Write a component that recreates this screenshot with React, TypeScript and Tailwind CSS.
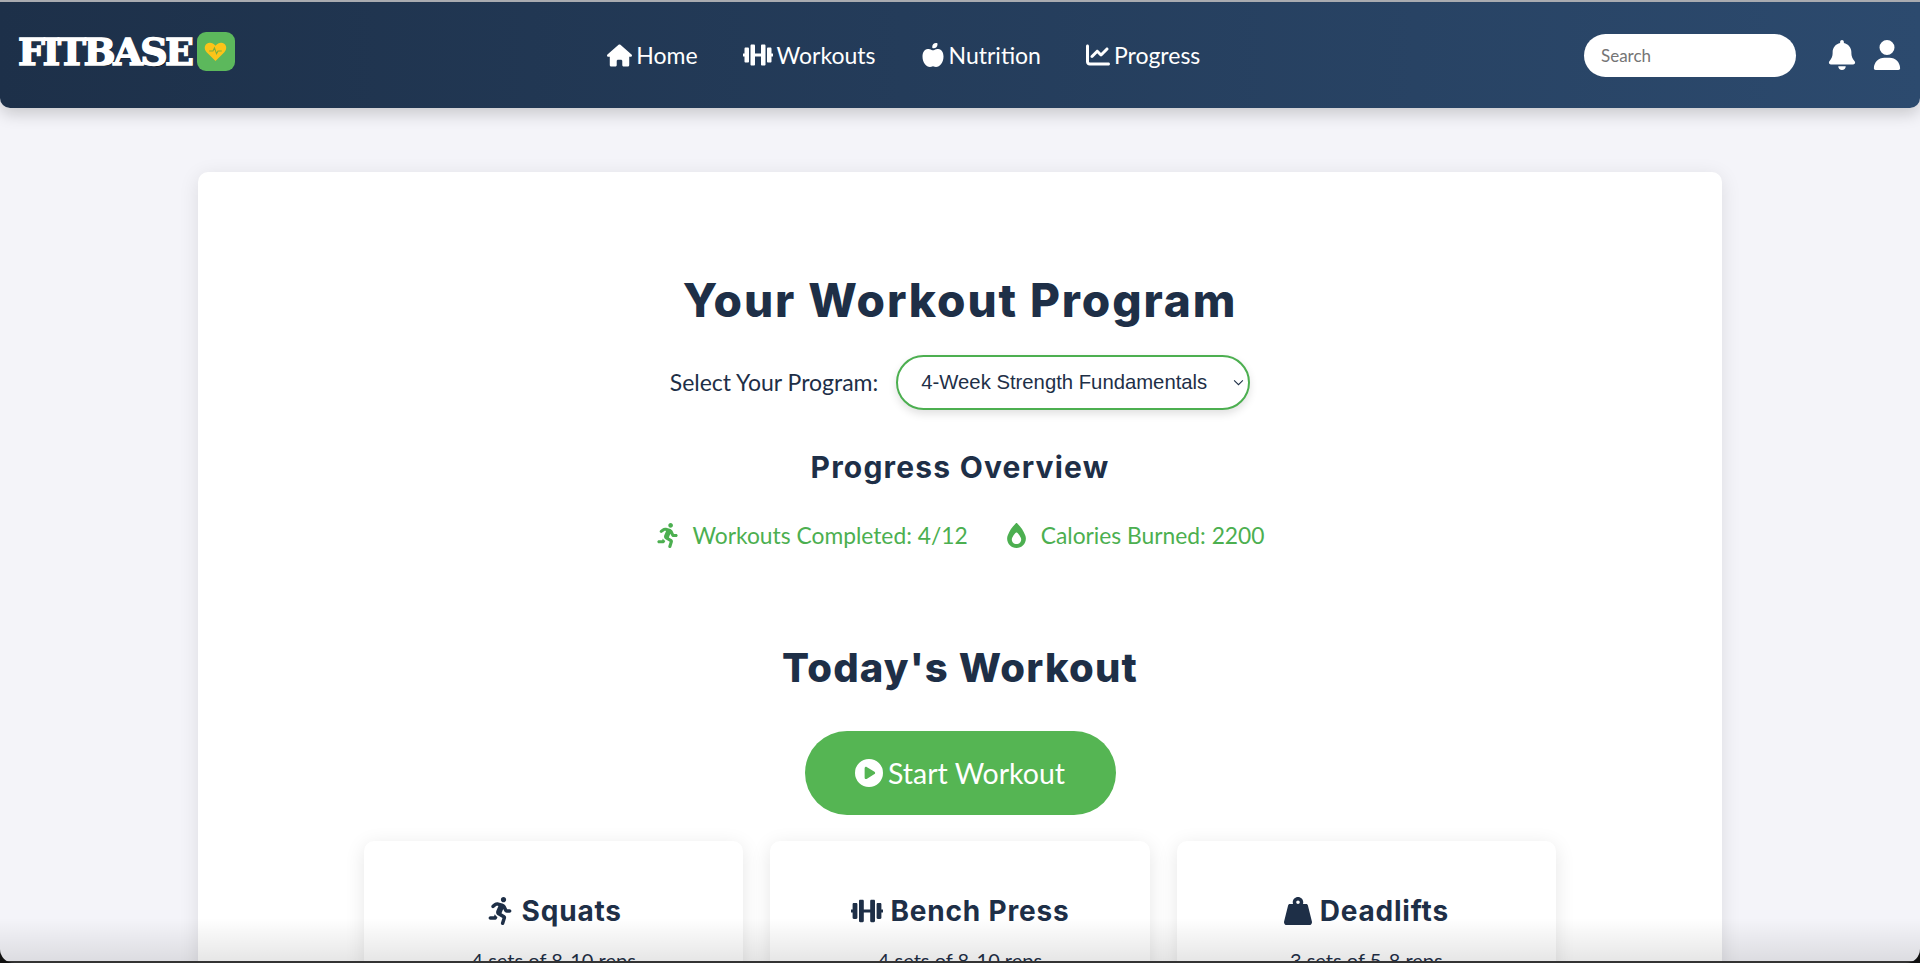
import { FaBell, FaChartLine, FaCirclePlay, FaFireFlameSimple, FaHouse, FaAppleWhole, FaUser } from "react-icons/fa6";
import { FaDumbbell, FaRunning, FaWeightHanging } from "react-icons/fa";
import type { ReactNode } from "react";

const headingFont = "font-['Inter','Noto_Sans',sans-serif]";

function NavItem({ icon, label }: { icon: ReactNode; label: string }) {
  return (
    <a href="#" className="flex items-center gap-1 text-white text-[23px] leading-none">
      {icon}
      <span>{label}</span>
    </a>
  );
}

function LogoBadge() {
  return (
    <div className="flex h-[39px] w-[38px] items-center justify-center rounded-[9px] bg-[#5cb85c]">
      <svg viewBox="0 0 24 24" className="h-[25px] w-[25px]">
        <path d="M12 21 3.5 12.6C1 10 1.2 6.4 3.6 4.6 6 2.8 9.6 3.4 12 6.4c2.4-3 6-3.6 8.4-1.8 2.4 1.8 2.6 5.4.1 8Z" fill="#fcc419" />
        <path d="M6 11.5h3.6l1.4-3 2 5.6 1.4-2.6H18" fill="none" stroke="#7fae3a" strokeWidth="1" />
      </svg>
    </div>
  );
}

function ExerciseCard({ icon, title, detail }: { icon: ReactNode; title: string; detail: string }) {
  return (
    <div className="h-[240px] rounded-[10px] bg-white pt-[50px] text-center shadow-[0_4px_20px_rgba(0,0,0,0.1)]">
      <h3 className={`${headingFont} flex items-center justify-center gap-2 text-[28px] leading-10 font-bold tracking-[0.8px] text-[#1e2f47]`}>
        {icon}
        {title}
      </h3>
      <p className="mt-[14px] text-[20px] text-[#1e2f47]">{detail}</p>
    </div>
  );
}

export default function App() {
  return (
    <div className="relative h-[963px] overflow-hidden border-t-2 border-[#a9abb0] bg-[#f4f4f9] font-['Lato',sans-serif]">
      <header className="flex h-[106px] items-center justify-between rounded-b-[10px] bg-gradient-to-r from-[#1d3049] to-[#2c4a6e] pr-[18px] pl-[18px] shadow-[0_6px_16px_rgba(0,0,0,0.18)]">
        <div className="-mt-[7px] flex items-center gap-[5px]">
          <span className="font-['DejaVu_Serif',serif] text-[38px] leading-none font-bold tracking-[-2.5px] text-white [-webkit-text-stroke:1.5px_white] [text-shadow:1px_1px_0_#000]">FITBASE</span>
          <LogoBadge />
        </div>
        <nav className="mr-[11px] flex items-center gap-[45px]">
          <NavItem icon={<FaHouse className="text-[25px]" />} label="Home" />
          <NavItem icon={<FaDumbbell className="text-[30px]" />} label="Workouts" />
          <NavItem icon={<FaAppleWhole className="text-[24px]" />} label="Nutrition" />
          <NavItem icon={<FaChartLine className="text-[24px]" />} label="Progress" />
        </nav>
        <div className="flex items-center">
          <input
            placeholder="Search"
            className="h-[43px] w-[212px] rounded-full bg-white px-[17px] text-[17px] outline-none placeholder:text-[#757575]"
          />
          <FaBell className="ml-[31px] text-[30px] text-white" />
          <FaUser className="ml-[15px] text-[30px] text-white" />
        </div>
      </header>

      <main className="mx-auto mt-[64px] h-[900px] w-[1524px] rounded-[10px] bg-white pt-[99px] shadow-[0_4px_20px_rgba(0,0,0,0.1)]">
        <h1 className={`${headingFont} text-center text-[46px] leading-[58px] font-extrabold tracking-[1.9px] text-[#1e2f47]`}>Your Workout Program</h1>
        <div className="mt-[26px] flex items-center justify-center gap-[18px]">
          <label className="text-[23px] text-[#1e2f47]">Select Your Program:</label>
          <div className="relative">
            <select className="h-[55px] w-[354px] appearance-none rounded-full border-2 border-[#4caf50] bg-white pr-[6px] pl-[23px] font-['Liberation_Sans',sans-serif] text-[20.3px] text-[#1e2f47] shadow-[0_4px_8px_rgba(0,0,0,0.12)] outline-none">
              <option>4-Week Strength Fundamentals</option>
            </select>
            <svg viewBox="0 0 12 8" className="pointer-events-none absolute top-[24px] right-[6px] h-[7px] w-[11px]" fill="none" stroke="#1e2f47" strokeWidth="1.2">
              <path d="M1 1.5 6 6.5 11 1.5" />
            </svg>
          </div>
        </div>
        <h2 className={`${headingFont} mt-[38px] text-center text-[30px] leading-[38px] font-bold tracking-[1.2px] text-[#1e2f47]`}>Progress Overview</h2>
        <div className="mt-[33px] flex items-center justify-center gap-[36px] text-[22.8px] leading-8 text-[#4caf50]">
          <div className="flex items-center gap-[12px]"><FaRunning className="text-[25px]" />Workouts Completed: 4/12</div>
          <div className="flex items-center gap-[12px]"><FaFireFlameSimple className="text-[25px]" />Calories Burned: 2200</div>
        </div>
        <h2 className={`${headingFont} mt-[90px] text-center text-[40px] leading-[54px] font-extrabold tracking-[1.2px] text-[#1e2f47]`}>Today's Workout</h2>
        <div className="mt-[36px] flex justify-center">
          <button className="flex h-[84px] w-[311px] items-center justify-center gap-[5px] rounded-full bg-[#55b553] text-[28.5px] text-white">
            <FaCirclePlay className="text-[28px]" />
            Start Workout
          </button>
        </div>
        <div className="mx-auto mt-[26px] grid w-[1192px] grid-cols-3 gap-[27px]">
          <ExerciseCard icon={<FaRunning />} title="Squats" detail="4 sets of 8-10 reps" />
          <ExerciseCard icon={<FaDumbbell className="text-[32px]" />} title="Bench Press" detail="4 sets of 8-10 reps" />
          <ExerciseCard icon={<FaWeightHanging />} title="Deadlifts" detail="3 sets of 5-8 reps" />
        </div>
      </main>

      {/* recording fade and rounded window corners at the bottom edge */}
      <div className="pointer-events-none absolute inset-x-0 bottom-0 h-[45px] bg-gradient-to-b from-transparent to-[rgba(0,0,0,0.1)]" />
      <div className="pointer-events-none absolute inset-x-0 bottom-0 h-[2px] bg-[#333]" />
      <div className="pointer-events-none absolute inset-0 rounded-b-[14px] shadow-[0_0_0_30px_#111]" />
    </div>
  );
}
